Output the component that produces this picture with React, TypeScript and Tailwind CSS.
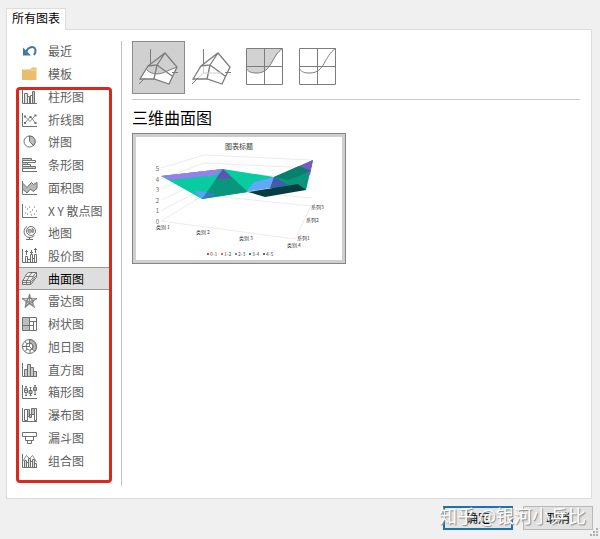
import React, { ReactNode } from "react";

const font = "font-['Noto_Sans_CJK_SC','Liberation_Sans',sans-serif]";

function Glyph({ children }: { children: ReactNode }) {
  return (
    <svg viewBox="0 0 16 16" className="h-4 w-4 shrink-0" fill="none" stroke="#707070" strokeWidth="1" aria-hidden="true">
      {children}
    </svg>
  );
}

const axis = <path d="M.5 1v13.500H15" />;

const items: { name: string; icon: ReactNode }[] = [
  {
    name: "最近",
    icon: (
      <>
        <path d="M4 10C5 4 12.500 1.500 13.500 7c.2 2-.5 3.500-1.500 5" stroke="#3f78b0" strokeWidth="2" />
        <path d="M1 4.500v8h8z" fill="#3f78b0" stroke="none" />
      </>
    ),
  },
  {
    name: "模板",
    icon: (
      <>
        <path d="M0 3.500h8l2-2h4.500V14H0z" fill="#e8bd6c" stroke="none" />
        <path d="M9 4h5" stroke="#f6dfae" />
      </>
    ),
  },
  {
    name: "柱形图",
    icon: (
      <>
        {axis}
        <path d="M2.500 14V4.500h3V14M5.500 14V7.500h2V14M8.500 14V6.500h2V14M10.500 14V2.500h2V14" />
        <path d="M4 5v9M11.500 3v11" stroke="#c4c4c4" />
      </>
    ),
  },
  {
    name: "折线图",
    icon: (
      <>
        {axis}
        <path d="m3 11 5.500-6.500 5 6.500M3 4.500l5 5 5.500-6.500" strokeWidth=".8" />
        <path d="M2 10h2v2H2zM7.500 4h2v2h-2zM12.500 10h2v2h-2zM12.500 2.500h2v2h-2zM2 3.500h2v2H2z" fill="#707070" stroke="none" />
      </>
    ),
  },
  {
    name: "饼图",
    icon: (
      <>
        <circle cx="7.500" cy="7.500" r="5.500" />
        <path d="M7.500 2v5.500l4 4A5.500 5.500 0 0 0 7.500 2z" fill="#bdbdbd" />
      </>
    ),
  },
  {
    name: "条形图",
    icon: (
      <>
        {axis}
        <path d="M.5 1.500h9v2H.5M.5 5.500h5v2H.5M.5 9.500h13v2H.5" fill="#c8c8c8" />
        <path d="M9.500 3.500h4v2h-8M5.500 7.500h3v2" />
      </>
    ),
  },
  {
    name: "面积图",
    icon: (
      <>
        {axis}
        <path d="m.5 3 4.500 4.500 4.500-5 2 2 3.500-2v6l-4 3-2.500-2.500-3.500 4-4.500-4z" fill="#b8b8b8" />
      </>
    ),
  },
  {
    name: "X Y 散点图",
    icon: (
      <>
        {axis}
        <path d="M3 10h1M5 6h1M5 11h1M8 9h1M7 4h1M10 7h1M12 4h1M12 11h1M14 8h1M9 12h1M3 4h1" strokeWidth="1.200" />
      </>
    ),
  },
  {
    name: "地图",
    icon: (
      <>
        <circle cx="9" cy="6" r="4.500" />
        <path d="M5 1.500C.5 4 1.500 11 6 12.300c3 .7 5-.3 6.500-2M7.500 12.500v2M4 14.500h7" />
        <path d="m6 4 3 .5 1 2-2 2-2-1.500zM10 3l2 2-1 3-1-2z" fill="#aaa" strokeWidth=".6" />
      </>
    ),
  },
  {
    name: "股价图",
    icon: (
      <>
        {axis}
        <path d="M3.500 14V8.500h2V14M8.500 14V6.500h2V14M12.500 14V6.500h2V14M5.500 11.500h3M10.500 10.500h2" />
        <path d="M3 3.500h3M8 4.500h3M12 1.500h3M4.500 2v5M9.500 2v4M13.500 0v5" />
      </>
    ),
  },
  {
    name: "曲面图",
    icon: (
      <>
        <path d="M.5 13.500v-4C3 8 3 3 6.500 1.500h8v5c-3 1.500-3 5.500-6 7H.5z" fill="#ececec" />
        <path d="M.5 9.500h8c3-1.500 3-6.500 6-8M4 5.500h8M8.500 9.500v4M4.500 9.500c2-1.500 3-6.500 6-8M4.500 9.500v4M.5 11.500h8c3-1.500 3-5.500 6-7" strokeWidth=".9" />
      </>
    ),
  },
  {
    name: "雷达图",
    icon: (
      <>
        <path d="m7.500 4 4 3-1 5.500-3-2-4 2.500L4 7.500z" fill="#ddd" strokeWidth=".7" />
        <path d="M7.500 1v8M0 5.500l7.500 3.500L15 5.500M3 14.500 7.500 9l5 5.500M0 5.500h15L3 14.500 7.500 1l5 13.500z" strokeWidth=".7" />
      </>
    ),
  },
  {
    name: "树状图",
    icon: (
      <>
        <path d="M.5 1.500h7v13h-7z" fill="#bdbdbd" />
        <path d="M.5 9.500h7M7.500 1.500h7v13h-7M7.500 5.500h7M11.500 5.500v9M7.500 9.500h4" />
      </>
    ),
  },
  {
    name: "旭日图",
    icon: (
      <>
        <circle cx="7.500" cy="7.500" r="7" />
        <path d="M7.500 4a3.500 3.500 0 0 1 2.500 6l3 2.500C16 8 13.500 1 7.500.5z" fill="#b8b8b8" />
        <circle cx="7.500" cy="7.500" r="3.500" />
        <path d="M7.500 4v3.500l2.500 2.500M7.500 7.500H4M.5 7.500H4M3 12.500 5 10M8 14.500V11M3 2.500 5 5" />
      </>
    ),
  },
  {
    name: "直方图",
    icon: (
      <>
        {axis}
        <path d="M2.500 14V7.500h3V14M5.500 14V2.500h3V14M8.500 14V5.500h3V14M11.500 14V9.500h3V14" fill="#c8c8c8" />
      </>
    ),
  },
  {
    name: "箱形图",
    icon: (
      <>
        {axis}
        <path d="M4 2v10M8.500 3v9M13 1v10M3 2.500h2M3 11.500h2M7.500 3.500h2M7.500 11.500h2M12 1.500h2M12 10.500h2" />
        <path d="M2.500 4.500h3v4h-3zM7 6.500h3v3H7zM11.500 3.500h3v3h-3z" fill="#eee" />
        <path d="M2.500 6.500h3M7 8h3M11.500 5h3" />
      </>
    ),
  },
  {
    name: "瀑布图",
    icon: (
      <>
        {axis}
        <path d="M2.500 2.500h3v11h-3zM12.500 1.500h2v12h-2z" />
        <path d="M5.500 2.500h2v7h-2zM9.500 1.500h3v6h-3zM7.500 7.500h2v3h-2z" fill="#bbb" />
      </>
    ),
  },
  {
    name: "漏斗图",
    icon: <path d="M.5 2.500h14v4H.5zM3.500 6.500h8v4h-8zM5.500 10.500h4v3h-4z" />,
  },
  {
    name: "组合图",
    icon: (
      <>
        {axis}
        <path d="M2.500 14V7.500h2V14M6.500 14V5.500h2V14M10.500 14V6.500h2V14M4.500 9.500h2M8.500 8.500h2M12.500 10.500h2V14" fill="#ddd" />
        <path d="m1 8 3.500-5.500 3 3 3-3L14.500 9" strokeWidth=".8" />
      </>
    ),
  },
];

function Surface({ filled }: { filled: boolean }) {
  return (
    <svg viewBox="0 0 51 51" className="h-[51px] w-[51px]" fill="none" stroke="#7c7c7c" strokeWidth="1" aria-hidden="true">
      {!filled && <path d="m15 24 17-13 12 14-8 17-15-5H7z" fill="#fff" stroke="none" />}
      {filled && (
        <path d="M14 28c5 5 13 5 20 1l5 5 3-5-6 13-15-5H7l6-9z" fill="#fff" stroke="none" />
      )}
      {filled && <path d="M34 29 44 25l-5 9z" fill="#fff" stroke="none" />}
      <path d="M17.500 7v15M6 42l6-6M39 30.500h6" />
      <path d="M15 24 32 11l12 14-8 17-15-5H7zl9-1 8-12M24 23l-3 14M24 23l15 11" strokeWidth="1.300" />
      {filled ? (
        <path d="M14 28c5 5 13 5 20 1l10-4" />
      ) : (
        <path d="M17.500 24v7H35M17.500 31 12 36" stroke="#cfcfcf" />
      )}
    </svg>
  );
}

function Contour({ filled }: { filled: boolean }) {
  return (
    <svg viewBox="0 0 51 51" className="h-[51px] w-[51px]" fill="none" stroke="#7c7c7c" aria-hidden="true">
      {filled && <path d="M7.500 6.500h36C35 12 33 31 18 31c-6 0-8-1-10.500-4z" fill="#d2d2d2" stroke="none" />}
      <path d="M7.500 6.500h36v36h-36zM25.500 6.500v36M7.500 24.500h36" />
      <path d="M7.500 27C10 30 12 31 18 31c15 0 14-17 25.500-24.500" />
    </svg>
  );
}

const subtypes = [
  { name: "三维曲面图", art: <Surface filled /> },
  { name: "三维线框曲面图", art: <Surface filled={false} /> },
  { name: "曲面图", art: <Contour filled /> },
  { name: "曲面图(俯视框架图)", art: <Contour filled={false} /> },
];

const legend = [
  { label: "0-1", color: "#e04040" },
  { label: "1-2", color: "#e8683c" },
  { label: "2-3", color: "#4a90d0" },
  { label: "3-4", color: "#08966f" },
  { label: "4-5", color: "#7058b8" },
];

function ChartPreview() {
  return (
    <svg viewBox="0 0 206 123" className="block h-[123px] w-[206px]" role="img" aria-label="图表标题">
      <g fill="none" stroke="#e2e2e2" strokeWidth=".7">
        <path d="M25 31 68 18l107 5M25 42l43-16 107 5M25 52l43-17 107 6M25 63l43-20 107 8M25 74l43-23 107 10M25 84l43-26 107 11M25 84l134 18 16-33" />
      </g>
      <path d="M25 39 87 32l51 8-27 15-45 7z" fill="#08cba2" />
      <path d="M25 39 87 32l-9 5-40 5z" fill="#9480ea" />
      <path d="M25 39 87 32l-7 6-45 5z" fill="#9480ea" />
      <path d="m87 32-21 30 46-7z" fill="#08967c" />
      <path d="m87 32-7 10 16-1z" fill="#6750b5" />
      <path d="m58 54 13 1-5 7z" fill="#5aa4f4" />
      <path d="m71 55 10 3-15 4z" fill="#397dc8" />
      <path d="m138 40-20 5-8 10 24-4z" fill="#62a8fa" />
      <path d="m138 40 39-17-7 30-36-2z" fill="#08967c" />
      <path d="m138 40-4 11 18-3z" fill="#435aaf" />
      <path d="m177 23-3 15-17-6z" fill="#7659c3" />
      <path d="m138 40 25-11 12 5-23 9z" fill="#08806b" />
      <path d="m112 55 50-8 8 6-41 7z" fill="#053d43" />
      <text x="103" y="12" textAnchor="middle" fontSize="7" fill="#404040">图表标题</text>
      <g fontSize="6" fill="#666" textAnchor="end">
        {[5, 4, 3, 2, 1, 0].map((n, i) => (
          <text key={n} x="23" y={34 + i * 10.5}>{n}</text>
        ))}
      </g>
      <g fontSize="5" fill="#333">
        <text x="20" y="92">类别 1</text>
        <text x="60" y="97">类别 2</text>
        <text x="103" y="103">类别 3</text>
        <text x="151" y="110">类别 4</text>
        <text x="175" y="72">系列3</text>
        <text x="170" y="85">系列2</text>
        <text x="161" y="103">系列1</text>
      </g>
      {legend.map((entry, i) => (
        <g key={entry.label}>
          <rect x={71 + i * 14} y="116" width="2" height="2" fill={entry.color} />
          <text x={74 + i * 14} y="119" fontSize="5" fill="#555">{entry.label}</text>
        </g>
      ))}
    </svg>
  );
}

export default function App() {
  return (
    <div className={`relative flex min-h-screen flex-col bg-[#f0f0f0] pt-2 pr-2 pl-[6px] text-[#606060] ${font}`}>
      <div role="tablist" className="flex">
        <button role="tab" aria-selected="true" className="relative z-10 -mb-px flex h-[22px] justify-center border border-b-0 border-[#dcdcdc] bg-white px-[5px] pt-px text-xs leading-4 text-black">
          所有图表
        </button>
      </div>

      <main className="flex flex-1 border border-[#dcdcdc] bg-white pt-[11px] pb-3">
        <nav aria-label="图表类型" className="relative ml-3 flex w-[91px] shrink-0 pb-[14px]">
          <ul className="-mt-px grid w-full auto-rows-fr">
            {items.map((item) => {
              const active = item.name === "曲面图";
              return (
                <li key={item.name} className="grid">
                  <button
                    aria-current={active}
                    className={`flex items-center gap-[10px] pl-[3px] text-left text-xs leading-4 whitespace-nowrap ${
                      active ? "border-y border-[#999] bg-[#dedede] text-black" : ""
                    }`}
                  >
                    <Glyph>{item.icon}</Glyph>
                    {item.name}
                  </button>
                </li>
              );
            })}
          </ul>
          <div className="pointer-events-none absolute top-[46px] -right-[2px] bottom-[3px] -left-[3px] rounded border-[3px] border-[#d9291f]" />
        </nav>

        <div className="ml-[11px] w-px shrink-0 bg-[#c0c0c0]" />

        <section className="min-w-0 flex-1 pr-[11px] pl-[10px]">
          <div className="flex border-b border-[#c8c8c8] pb-[5px]">
            {subtypes.map((type, i) => (
              <button
                key={type.name}
                aria-label={type.name}
                title={type.name}
                className={`h-[53px] w-[53px] border ${i === 0 ? "border-[#8c8c8c] bg-[#d0d0d0]" : "border-transparent"}`}
              >
                {type.art}
              </button>
            ))}
          </div>
          <h1 className="mt-[5px] text-base leading-6 text-black">三维曲面图</h1>
          <button aria-label="三维曲面图预览" className="mt-1 border border-[#858585] bg-[#cfcfcf] p-[3px]">
            <span className="block bg-white">
              <ChartPreview />
            </span>
          </button>
        </section>
      </main>

      <footer className="-mr-px flex h-10 items-start justify-end gap-[10px] pt-[7px] text-xs text-black">
        <button className="h-6 w-[70px] border-2 border-[#1673b8] bg-[#e4e4e4] leading-5">确定</button>
        <button className="h-6 w-[70px] border border-[#b8b8b8] bg-[#e1e1e1] leading-5">取消</button>
      </footer>
      <div className="pointer-events-none absolute right-[14px] bottom-3 text-lg leading-6 whitespace-nowrap text-white [text-shadow:1px_1px_1px_#888]">
        知乎 @银河小乒比
      </div>
      <svg viewBox="0 0 9 9" className="absolute right-px bottom-[2px] h-[9px] w-[9px]" fill="#b0b0b0" aria-hidden="true">
        <path d="M6 0h2v2H6zM3 3h2v2H3zM6 3h2v2H6zM0 6h2v2H0zM3 6h2v2H3zM6 6h2v2H6z" />
      </svg>
    </div>
  );
}
